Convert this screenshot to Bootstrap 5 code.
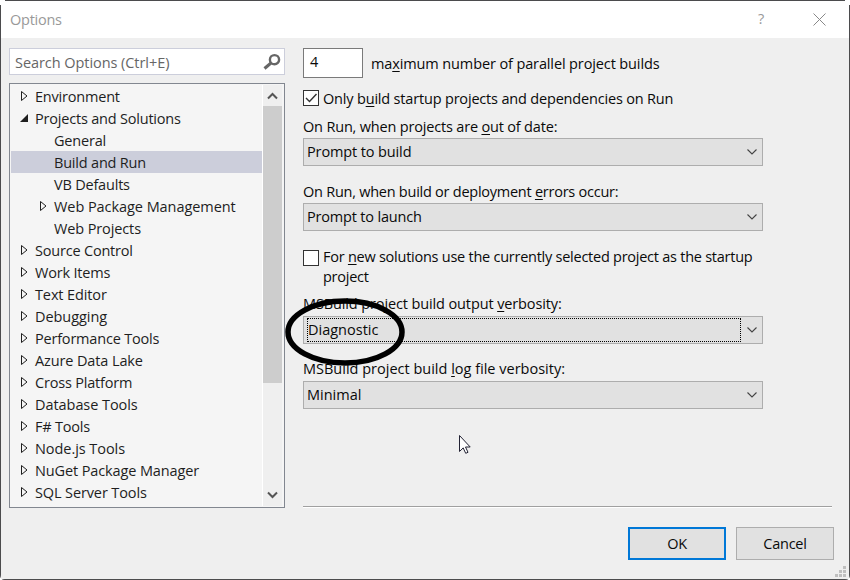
<!DOCTYPE html>
<html lang="en">
<head>
<meta charset="utf-8">
<meta name="viewport" content="width=device-width, initial-scale=1">
<title>Options</title>
<link href="https://cdn.jsdelivr.net/npm/bootstrap@5.3.0/dist/css/bootstrap.min.css" rel="stylesheet">
<style>
  body { width: 850px; height: 580px; overflow: hidden; background: #fff; font: 14.5px/20px "Open Sans", "Noto Sans", sans-serif; letter-spacing: -.25px; color: #111; }
  .dialog { width: 850px; height: 580px; background: #efefef; border: 1px solid #4b4b4d; }
  .notch { width: 5px; height: 5px; background: #fff; }
  .titlebar { height: 37px; background: #fff; color: #999; padding: 0 23px 0 9px; }
  .titlebar .help { margin: -2px 49px 0 0; font-size: 14.5px; }
  .side { width: 276px; margin-left: 8px; }
  .search { height: 27px; margin-top: 10px; border: 1px solid #cccedb; background: #fff; color: #666; padding: 0 3px 0 5px; }
  .search span { padding-top: 2px; }
  .tree { height: 425px; margin-top: 8px; border: 1px solid #828790; background: #f5f5f5; padding: 1px; color: #1e1e1e; letter-spacing: -.2px; }
  .tree-row { height: 22px; line-height: 24px; padding-left: 8px; }
  .tree-row.child { padding-left: 27px; }
  .tree-row.picked { background: #cccedb; }
  .twist { width: 16px; height: 22px; flex: none; }
  .scroller { width: 20px; background: #efefef; border-left: 1px solid #fff; margin-right: 1px; }
  .scroller .thumb { height: 277px; background: #cdcdcd; }
  .scroller svg { display: block; }
  .panel { width: 529px; margin-left: 18px; padding-top: 10px; color: #0a0a0a; }
  .count { width: 60px; height: 30px; border: 1px solid #7a7a7a; background: #fff; padding: 3px 6px; }
  .count + span { margin: 6px 0 0 8px; }
  .check-row { margin-top: 10px; line-height: 22px; }
  .check-row.long { margin-top: 16px; line-height: 20px; }
  .tick { width: 16px; height: 16px; border: 1px solid #333; background: #fff; flex: none; margin: 2px 4px 0 0; }
  .long .tick { margin-top: 3px; }
  .tick svg { display: block; }
  .caption { height: 21px; margin-top: 16px; }
  .caption.first { margin-top: 7px; }
  .caption.after-check { height: 22px; margin-top: 7px; }
  .caption.last { height: 22px; margin-top: 15px; }
  .combo { width: 460px; height: 28px; border: 1px solid #adadad; background: #e1e1e1; padding: 0 5px 0 3px; }
  .combo svg { display: block; }
  .focus { width: 434px; height: 24px; border: 1px dotted #000; margin-left: -1px; line-height: 22px; }
  .rule { height: 2px; border-top: 1px solid #a0a0a0; border-bottom: 1px solid #fff; margin-top: 97px; }
  .dlg-btn { width: 98px; height: 33px; border: 1px solid #adadad; border-radius: 0; background: #e1e1e1; padding: 0; font-size: inherit; letter-spacing: inherit; color: #0a0a0a; }
  .dlg-btn.main { border: 2px solid #0078d7; }
  .footer { padding: 19px 15px 0 0; gap: 10px; }
  .ring { left: 283px; top: 295px; }
  .pointer { left: 458px; top: 434px; }
  .grip { left: 834px; top: 565px; }
  .ls-1 { letter-spacing: -.18px; }
  .ls-2 { letter-spacing: -.12px; }
  .ls-3 { letter-spacing: -.06px; }
  .ls-4 { letter-spacing: 0; }
  u { text-underline-offset: 2px; text-decoration-thickness: 1px; text-decoration-skip-ink: none; }
</style>
</head>
<body>
<svg width="0" height="0" class="position-absolute">
  <symbol id="closed" viewBox="0 0 16 22"><path d="M2.500 6.500v9l5.500-4.500z" fill="none" stroke="#1e1e1e"/></symbol>
  <symbol id="open" viewBox="0 0 16 22"><path d="M9 7v8H1z" fill="#1e1e1e"/></symbol>
  <symbol id="chev" viewBox="0 0 10 6"><path d="M.5.5 5 5 9.500.5" fill="none" stroke="#444" stroke-width="1.100"/></symbol>
</svg>
<main class="dialog position-relative">
  <header class="titlebar d-flex align-items-center">
    <span class="me-auto">Options</span>
    <span class="help">?</span>
    <svg width="13" height="13"><path d="M.5.500l12 12M12.500.500l-12 12" stroke="#888"/></svg>
  </header>
  <div class="d-flex">
    <aside class="side">
      <div class="search d-flex align-items-center justify-content-between">
        <span class="ls-3">Search Options (Ctrl+E)</span>
        <svg width="18" height="18"><circle cx="11.500" cy="6.700" r="4.600" fill="none" stroke="#666" stroke-width="2.400"/><path d="M8 10 1.500 15.500" stroke="#666" stroke-width="3"/></svg>
      </div>
      <div class="tree d-flex">
        <div class="flex-grow-1">
          <div class="tree-row d-flex"><svg class="twist"><use href="#closed"/></svg><span>Environment</span></div>
          <div class="tree-row d-flex"><svg class="twist"><use href="#open"/></svg><span>Projects and Solutions</span></div>
          <div class="tree-row child d-flex"><i class="twist"></i><span>General</span></div>
          <div class="tree-row child picked d-flex"><i class="twist"></i><span>Build and Run</span></div>
          <div class="tree-row child d-flex"><i class="twist"></i><span>VB Defaults</span></div>
          <div class="tree-row child d-flex"><svg class="twist"><use href="#closed"/></svg><span class="ls-3">Web Package Management</span></div>
          <div class="tree-row child d-flex"><i class="twist"></i><span class="ls-2">Web Projects</span></div>
          <div class="tree-row d-flex"><svg class="twist"><use href="#closed"/></svg><span>Source Control</span></div>
          <div class="tree-row d-flex"><svg class="twist"><use href="#closed"/></svg><span>Work Items</span></div>
          <div class="tree-row d-flex"><svg class="twist"><use href="#closed"/></svg><span class="ls-2">Text Editor</span></div>
          <div class="tree-row d-flex"><svg class="twist"><use href="#closed"/></svg><span class="ls-3">Debugging</span></div>
          <div class="tree-row d-flex"><svg class="twist"><use href="#closed"/></svg><span>Performance Tools</span></div>
          <div class="tree-row d-flex"><svg class="twist"><use href="#closed"/></svg><span class="ls-2">Azure Data Lake</span></div>
          <div class="tree-row d-flex"><svg class="twist"><use href="#closed"/></svg><span>Cross Platform</span></div>
          <div class="tree-row d-flex"><svg class="twist"><use href="#closed"/></svg><span class="ls-3">Database Tools</span></div>
          <div class="tree-row d-flex"><svg class="twist"><use href="#closed"/></svg><span>F# Tools</span></div>
          <div class="tree-row d-flex"><svg class="twist"><use href="#closed"/></svg><span class="ls-3">Node.js Tools</span></div>
          <div class="tree-row d-flex"><svg class="twist"><use href="#closed"/></svg><span class="ls-2">NuGet Package Manager</span></div>
          <div class="tree-row d-flex"><svg class="twist"><use href="#closed"/></svg><span class="ls-2">SQL Server Tools</span></div>
        </div>
        <div class="scroller d-flex flex-column">
          <svg width="19" height="21"><path d="M5 13.500 9.500 9l4.500 4.500" fill="none" stroke="#555" stroke-width="2"/></svg>
          <div class="thumb"></div>
          <svg class="mt-auto" width="19" height="21"><path d="M5 7.500 9.500 12l4.500-4.500" fill="none" stroke="#555" stroke-width="2"/></svg>
        </div>
      </div>
    </aside>
    <section class="panel">
      <div class="d-flex"><div class="count">4</div><span class="ls-2">ma<u>x</u>imum number of parallel project builds</span></div>
      <div class="check-row d-flex"><span class="tick"><svg width="14" height="14"><path d="M2 7l3.500 3.500L12.500 3" fill="none" stroke="#333" stroke-width="1.400"/></svg></span><span class="ls-1">Only b<u>u</u>ild startup projects and dependencies on Run</span></div>
      <div class="caption first ls-1">On Run, when projects are <u>o</u>ut of date:</div>
      <div class="combo d-flex align-items-center justify-content-between"><span class="ls-2">Prompt to build</span><svg width="10" height="6"><use href="#chev"/></svg></div>
      <div class="caption">On Run, when build or deployment <u>e</u>rrors occur:</div>
      <div class="combo d-flex align-items-center justify-content-between"><span class="ls-1">Prompt to launch</span><svg width="10" height="6"><use href="#chev"/></svg></div>
      <div class="check-row long d-flex"><span class="tick"></span><span>For <u>n</u>ew solutions use the currently selected project as the startup<br>project</span></div>
      <div class="caption after-check ls-2">MSBuild project build output <u>v</u>erbosity:</div>
      <div class="combo d-flex align-items-center justify-content-between ps-1"><span class="focus ls-4">Diagnostic</span><svg width="10" height="6"><use href="#chev"/></svg></div>
      <div class="caption last ls-4">MSBuild project build <u>l</u>og file verbosity:</div>
      <div class="combo d-flex align-items-center justify-content-between"><span class="ls-4">Minimal</span><svg width="10" height="6"><use href="#chev"/></svg></div>
      <div class="rule"></div>
    </section>
  </div>
  <footer class="footer d-flex justify-content-end"><button class="btn dlg-btn main">OK</button><button class="btn dlg-btn">Cancel</button></footer>
  <i class="notch position-absolute" style="left:-1px;top:-1px"></i>
  <i class="notch position-absolute" style="right:-1px;top:-1px"></i>
</main>
<svg class="ring position-absolute" width="124" height="74"><ellipse cx="62" cy="37" rx="57" ry="31" fill="none" stroke="#000" stroke-width="5.500"/></svg>
<svg class="pointer position-absolute" width="14" height="21"><path d="M1.500 1.500v16l3.700-3.600 2.500 5.400 2.300-1-2.500-5.300h4.700z" fill="#fff" stroke="#223"/></svg>
<svg class="grip position-absolute" width="13" height="13" fill="#bfbfbf"><path d="M9 1h3v3H9zM5 5h3v3H5zM9 5h3v3H9zM1 9h3v3H1zM5 9h3v3H5zM9 9h3v3H9z"/></svg>
<svg class="position-absolute bottom-0 start-0" width="5" height="5"><path d="M0 0Q0 5 5 5H0z" fill="#fff"/></svg>
<svg class="position-absolute bottom-0 end-0" width="5" height="5"><path d="M5 0Q5 5 0 5H5z" fill="#fff"/></svg>
<script src="https://cdn.jsdelivr.net/npm/bootstrap@5.3.0/dist/js/bootstrap.bundle.min.js"></script>
</body>
</html>
